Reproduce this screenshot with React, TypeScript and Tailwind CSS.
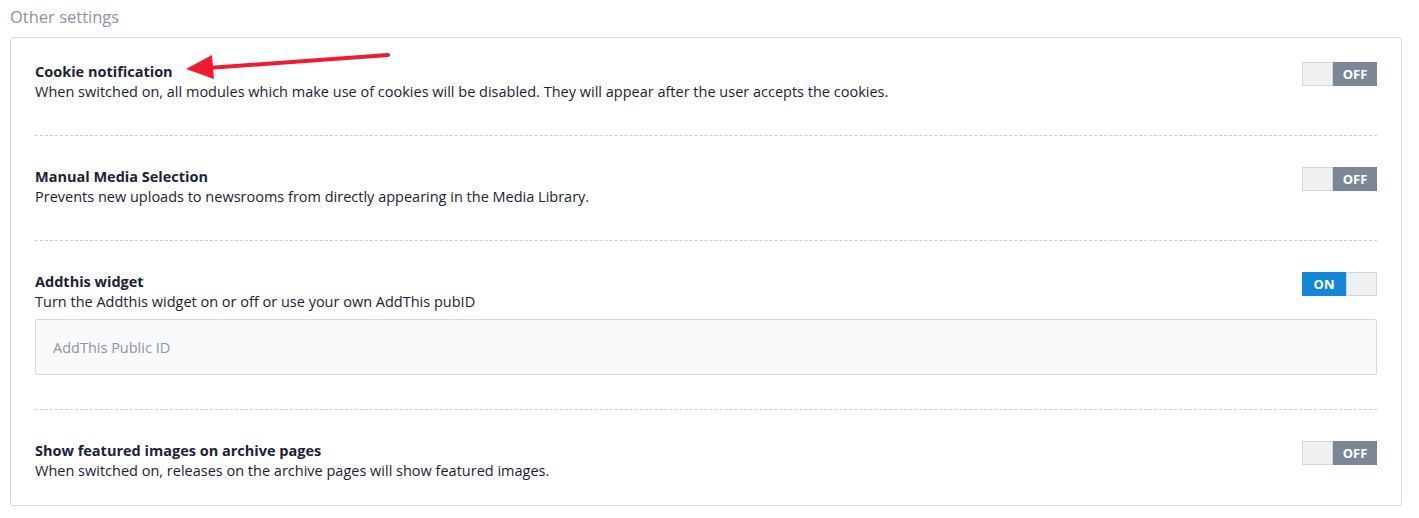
import React from "react";

type Setting = {
  title: string;
  description: string;
  on: boolean;
  input?: string;
};

const settings: Setting[] = [
  {
    title: "Cookie notification",
    description:
      "When switched on, all modules which make use of cookies will be disabled. They will appear after the user accepts the cookies.",
    on: false,
  },
  {
    title: "Manual Media Selection",
    description: "Prevents new uploads to newsrooms from directly appearing in the Media Library.",
    on: false,
  },
  {
    title: "Addthis widget",
    description: "Turn the Addthis widget on or off or use your own AddThis pubID",
    on: true,
    input: "AddThis Public ID",
  },
  {
    title: "Show featured images on archive pages",
    description: "When switched on, releases on the archive pages will show featured images.",
    on: false,
  },
];

const Toggle: React.FC<{ on: boolean }> = ({ on }) => (
  <div className="flex h-[24px] w-[75px] shrink-0 text-[13px] font-bold leading-none text-white">
    {on ? (
      <>
        <div className="flex w-[44px] items-center justify-center bg-[#1487d7]">ON</div>
        <div className="flex-1 border border-[#d3d8de] bg-[#eef0f2]" />
      </>
    ) : (
      <>
        <div className="flex-1 border border-[#d3d8de] bg-[#eef0f2]" />
        <div className="flex w-[44px] items-center justify-center bg-[#7b8797]">OFF</div>
      </>
    )}
  </div>
);

const App: React.FC = () => {
  return (
    <div className="relative min-h-[518px] bg-white font-['Open_Sans',sans-serif] text-[#1b2336]">
      <h2 className="pl-[10px] pt-[5px] text-[16.5px] leading-[24px] text-[#8a94a3]">Other settings</h2>

      <div className="ml-[10px] mr-[17px] mt-[8px] rounded-[3px] border border-[#d5d9df] px-[24px]">
        {settings.map((s, i) => (
          <div
            key={s.title}
            className={`flex flex-col ${i === 0 ? "pt-[24px]" : "pt-[31px]"} ${
              i === settings.length - 1
                ? "pb-[24px]"
                : s.input
                ? "pb-[34px] border-b border-dashed border-[#c9ced6]"
                : "pb-[33px] border-b border-dashed border-[#c9ced6]"
            }`}
          >
            <div className="flex items-start justify-between gap-6">
              <div>
                <div className="text-[14.5px] font-bold leading-[20px]">{s.title}</div>
                <div className="text-[14.5px] leading-[20px]">{s.description}</div>
              </div>
              <Toggle on={s.on} />
            </div>
            {s.input && (
              <input
                placeholder={s.input}
                className="mt-[7px] h-[56px] w-full rounded-[2px] border border-[#d6dbe2] bg-[#f9fafc] px-[17px] text-[14.5px] text-[#1b2336] outline-none placeholder:text-[#8d95a2]"
              />
            )}
          </div>
        ))}
      </div>

      <svg
        className="pointer-events-none absolute left-[180px] top-[45px]"
        width="215"
        height="40"
        viewBox="0 0 215 40"
      >
        <line x1="208" y1="10" x2="28" y2="23" stroke="#ee1c2e" strokeWidth="4" strokeLinecap="round" />
        <polygon points="6,24 32,10 34,34" fill="#ee1c2e" />
      </svg>
    </div>
  );
};

export default App;
